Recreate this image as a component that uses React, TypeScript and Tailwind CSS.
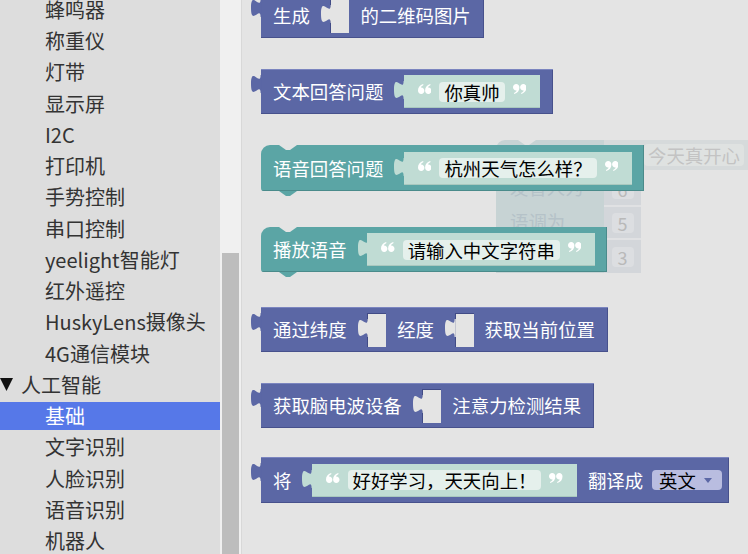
import React from 'react';

// toolbox rows, top to bottom
const TOOLBOX: { label: string; kind?: 'category' | 'selected' }[] = [
  { label: '蜂鸣器' },
  { label: '称重仪' },
  { label: '灯带' },
  { label: '显示屏' },
  { label: 'I2C' },
  { label: '打印机' },
  { label: '手势控制' },
  { label: '串口控制' },
  { label: 'yeelight智能灯' },
  { label: '红外遥控' },
  { label: 'HuskyLens摄像头' },
  { label: '4G通信模块' },
  { label: '人工智能', kind: 'category' },
  { label: '基础', kind: 'selected' },
  { label: '文字识别' },
  { label: '人脸识别' },
  { label: '语音识别' },
  { label: '机器人' },
];

// Blockly output-tab shape, scaled 1.2x
function Tab({ fill, className }: { fill: string; className: string }) {
  return (
    <svg className={className} width="10.8" height="18" viewBox="1 0 9 15" preserveAspectRatio="none">
      <path d="M9,0 c0,10 -8,-8 -8,7.5 s8,-2.5 8,7.5 L10,15 L10,0 Z" fill={fill} />
    </svg>
  );
}

function Label({ children }: { children: React.ReactNode }) {
  return <span className="whitespace-nowrap text-[18.4px] leading-none text-white">{children}</span>;
}

function Slot() {
  return (
    <div className="relative ml-[9.6px] h-[34px] w-[19px] bg-[#e4e4e4] shadow-[inset_1px_1px_0_#414b86]">
      <Tab fill="#e4e4e4" className="absolute left-[-9.6px] top-[6px]" />
    </div>
  );
}

// one quote mark (closing shape), dot on top and tail below
const MARK =
  'M3.2,0 C5,0 6.4,1.4 6.4,3.4 C6.4,6.7 4.5,8.9 1.3,10 L0.9,9.1 C2.5,8.3 3.4,7.3 3.6,6.5 C3.5,6.6 3.3,6.6 3.2,6.6 C1.4,6.6 0,5.2 0,3.3 C0,1.5 1.4,0 3.2,0 Z';

function Quote({ close }: { close?: boolean }) {
  return (
    <svg className="mt-[-5px] shrink-0" width="13.5" height="10" viewBox="0 0 13.5 10">
      <g fill="#ffffff" transform={close ? undefined : 'rotate(180 6.75 5)'}>
        <path d={MARK} />
        <path d={MARK} transform="translate(7.1 0)" />
      </g>
    </svg>
  );
}

function TextInput({ text }: { text: string }) {
  return (
    <div className="relative ml-[9.6px] flex h-[33px] items-center gap-[8px] bg-[#c0dcd4] px-[14px] shadow-[inset_0_-1px_0_#a9c8bf]">
      <Tab fill="#c0dcd4" className="absolute left-[-9.6px] top-[6px]" />
      <Quote />
      <span className="h-[20px] whitespace-nowrap rounded-[4px] bg-[#e5f0ec] px-[5px] text-[18.4px] leading-[20px] text-black">
        {text}
      </span>
      <Quote close />
    </div>
  );
}

// indigo value block with an output tab on the left
function ValueBlock({ children, className }: { children: React.ReactNode; className: string }) {
  return (
    <div
      className={`relative flex items-center gap-[11px] bg-[#5b67a5] pl-[12px] shadow-[inset_0_1px_0_#7b85bf,inset_-1px_-1px_0_#47518c] ${className}`}
    >
      <Tab fill="#5b67a5" className="absolute left-[-9.6px] top-[6px]" />
      {children}
    </div>
  );
}

// teal statement block: notch on top, tab under
function StatementBlock({ children, className }: { children: React.ReactNode; className: string }) {
  return (
    <div
      className={`relative flex items-center gap-[11px] rounded-tl-[9px] rounded-bl-[3px] bg-[#5ba5a5] pl-[12px] pr-[12px] shadow-[inset_-1px_-1px_0_#4a8b8b] ${className}`}
    >
      <svg className="absolute left-[18px] top-0" width="18" height="5" viewBox="0 0 18 5">
        <polygon points="0,0 7,5 11,5 18,0" fill="#e4e4e4" />
      </svg>
      <svg className="absolute bottom-[-5px] left-[18px]" width="18" height="5" viewBox="0 0 18 5">
        <polygon points="0,0 7,5 11,5 18,0" fill="#5ba5a5" />
      </svg>
      {children}
    </div>
  );
}

const GHOST_ROWS = [
  { label: '发音人为', value: '6', h: 'h-[35px]' },
  { label: '语调为', value: '5', h: 'h-[33px]' },
  { label: '语速为', value: '3', h: 'h-[35px]' },
];

// the faded (dragged) speech block sitting behind the teal ones
function GhostBlock() {
  return (
    <div className="absolute left-[254px] top-[140px] flex w-[260px] flex-col text-[18.4px] leading-none">
      <svg className="absolute left-[22px] top-0" width="18" height="5" viewBox="0 0 18 5">
        <polygon points="0,0 7,5 11,5 18,0" fill="#e4e4e4" />
      </svg>
      <div className="flex h-[30px]">
        <div className="flex w-[108px] items-center rounded-tl-[9px] bg-[#c7d3d4] pl-[14px] text-[#b7c4c9]">语音合成</div>
        <div className="flex flex-1 items-center bg-[#d6dadb] pl-[40px]">
          <span className="h-[22px] whitespace-nowrap rounded-[4px] bg-[#dfe2e1] px-[4px] leading-[22px] text-[#c3c3c3]">
            今天真开心
          </span>
        </div>
      </div>
      {GHOST_ROWS.map((row) => (
        <div key={row.label} className={`flex ${row.h}`}>
          <div className="flex w-[108px] items-center whitespace-nowrap bg-[#c7d3d4] pl-[14px] text-[#b5c2c8]">
            {row.label}
          </div>
          <div className="flex w-[37px] items-center justify-center border-t-[2px] border-[#e0e1e3] bg-[#d3d6da]">
            <span className="flex h-[20px] w-[22px] items-center justify-center rounded-[4px] bg-[#dcdee1] text-[18px] text-[#b9b9b9]">
              {row.value}
            </span>
          </div>
        </div>
      ))}
    </div>
  );
}

export default function App() {
  return (
    <div className="flex h-[554px] w-[748px] overflow-hidden bg-[#e4e4e4] font-['Noto_Sans_CJK_SC','Microsoft_YaHei',sans-serif]">
      {/* toolbox */}
      <div className="flex w-[220px] flex-col bg-[#dddddd]">
        <div className="mt-[-4.25px] flex flex-col">
          {TOOLBOX.map((item) => (
            <div
              key={item.label}
              className={
                item.kind === 'selected'
                  ? 'mb-[3.25px] flex h-[28px] items-center bg-[#5678e8] pl-[45px] text-[20px] leading-none text-white'
                  : item.kind === 'category'
                    ? 'mb-[3.25px] flex h-[28px] items-center pl-0 text-[20px] leading-none text-[#333333]'
                    : 'mb-[3.25px] flex h-[28px] items-center pl-[45px] text-[20px] leading-none text-[#333333]'
              }
            >
              {item.kind === 'category' && (
                <svg className="mr-[8px]" width="13" height="13" viewBox="0 0 13 13">
                  <polygon points="0,0 13,0 6.5,13" fill="#111111" />
                </svg>
              )}
              <span className="whitespace-nowrap">{item.label}</span>
            </div>
          ))}
        </div>
      </div>

      {/* toolbox scrollbar */}
      <div className="flex w-[21px] flex-col bg-[#f0f0f0] px-[2px]">
        <div className="mt-[253px] flex-1 bg-[#bdbdbd]" />
      </div>

      {/* workspace */}
      <div className="relative flex flex-1 flex-col items-start border-l border-[#d8d8d8] pl-[19px]">
        <GhostBlock />

        <ValueBlock className="mt-[-7px] h-[45px] pr-[13px]">
          <Label>生成</Label>
          <Slot />
          <Label>的二维码图片</Label>
        </ValueBlock>

        <ValueBlock className="mt-[31px] h-[45px] pr-[13px]">
          <Label>文本回答问题</Label>
          <TextInput text="你真帅" />
        </ValueBlock>

        <StatementBlock className="mt-[31px] h-[46px]">
          <Label>语音回答问题</Label>
          <TextInput text="杭州天气怎么样？" />
        </StatementBlock>

        <StatementBlock className="mt-[36px] h-[45px]">
          <Label>播放语音</Label>
          <TextInput text="请输入中文字符串" />
        </StatementBlock>

        <ValueBlock className="mt-[35px] h-[45px] pr-[13px]">
          <Label>通过纬度</Label>
          <Slot />
          <Label>经度</Label>
          <Slot />
          <Label>获取当前位置</Label>
        </ValueBlock>

        <ValueBlock className="mt-[31px] h-[45px] pr-[13px]">
          <Label>获取脑电波设备</Label>
          <Slot />
          <Label>注意力检测结果</Label>
        </ValueBlock>

        <ValueBlock className="mt-[29px] h-[46px] pr-[7px]">
          <Label>将</Label>
          <TextInput text="好好学习，天天向上！" />
          <Label>翻译成</Label>
          <span className="ml-[-2px] flex h-[20px] items-center gap-[8px] rounded-[4px] bg-[#b9bde0] pl-[7px] pr-[10px] text-[18.4px] leading-none text-black">
            英文
            <svg width="8" height="5" viewBox="0 0 8 5">
              <polygon points="0,0 8,0 4,5" fill="#5b67a5" />
            </svg>
          </span>
        </ValueBlock>
      </div>
    </div>
  );
}
